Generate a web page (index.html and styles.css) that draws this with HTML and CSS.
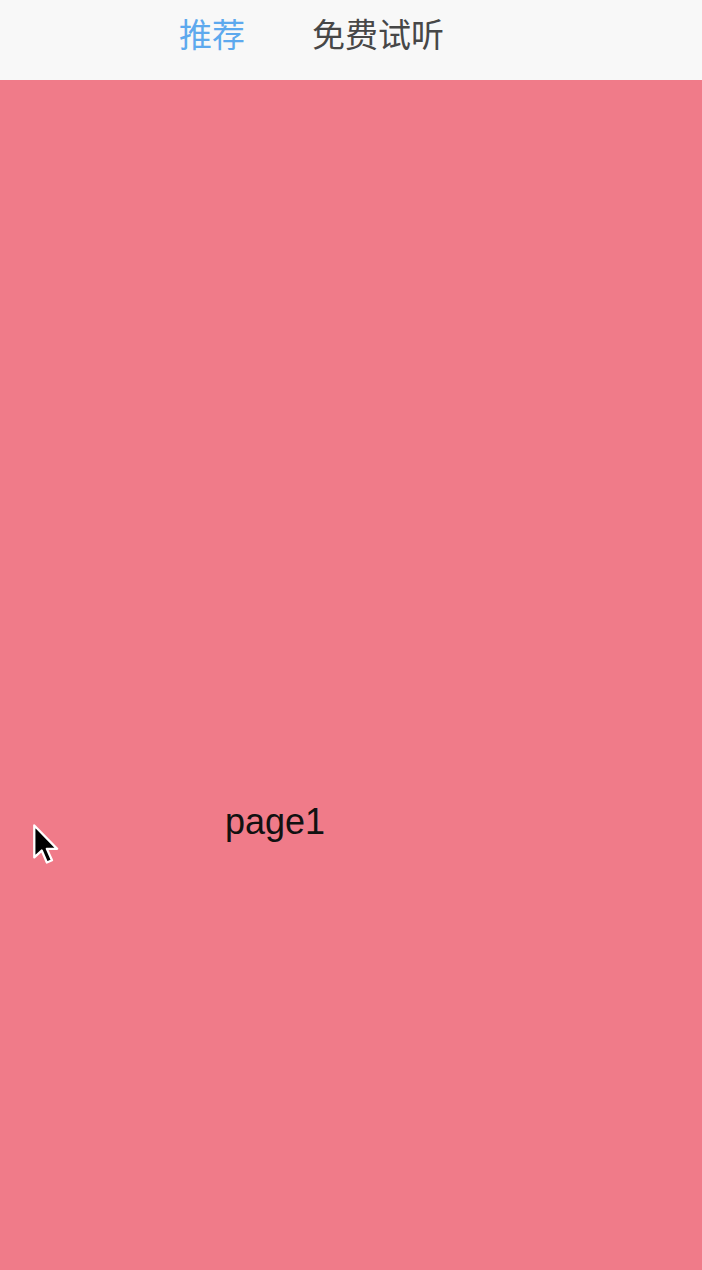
FILE: index.html
```html
<!DOCTYPE html>
<html lang="zh">
<head>
<meta charset="utf-8">
<link rel="stylesheet" href="styles.css">
</head>
<body>
<div class="app">
  <div class="tabs">
    <span class="tab active">推荐</span>
    <span class="tab">免费试听</span>
  </div>
  <div class="page">
    <div class="label">page1</div>
    <svg class="cursor" width="32" height="46" viewBox="0 0 28 40">
      <path d="M2 2 L2 30 L8.5 24 L13 34.5 L17.5 32.5 L13 22.5 L22 22.5 Z" fill="#000" stroke="#fff" stroke-width="2" stroke-linejoin="round"/>
    </svg>
  </div>
</div>
</body>
</html>
```
FILE: styles.css
```css
html, body {
  margin: 0;
  padding: 0;
}
body {
  width: 702px;
  height: 1270px;
  overflow: hidden;
  font-family: "Liberation Sans", "Noto Sans CJK SC", sans-serif;
}
.app {
  display: flex;
  flex-direction: column;
  height: 1270px;
}
.tabs {
  height: 80px;
  background: #f8f8f8;
  display: flex;
  align-items: flex-start;
  padding-left: 179px;
  gap: 67px;
  box-sizing: border-box;
  padding-top: 11px;
}
.tab {
  font-family: "Noto Sans CJK SC", sans-serif;
  font-size: 33px;
  line-height: 44px;
  color: #474747;
}
.tab.active {
  color: #5da9ee;
}
.page {
  flex: 1;
  background: #f07b89;
  position: relative;
}
.label {
  padding-top: 718px;
  padding-left: 225px;
  font-size: 36px;
  line-height: 48px;
  color: #111;
}
.cursor {
  position: absolute;
  left: 32px;
  top: 743px;
}
```
